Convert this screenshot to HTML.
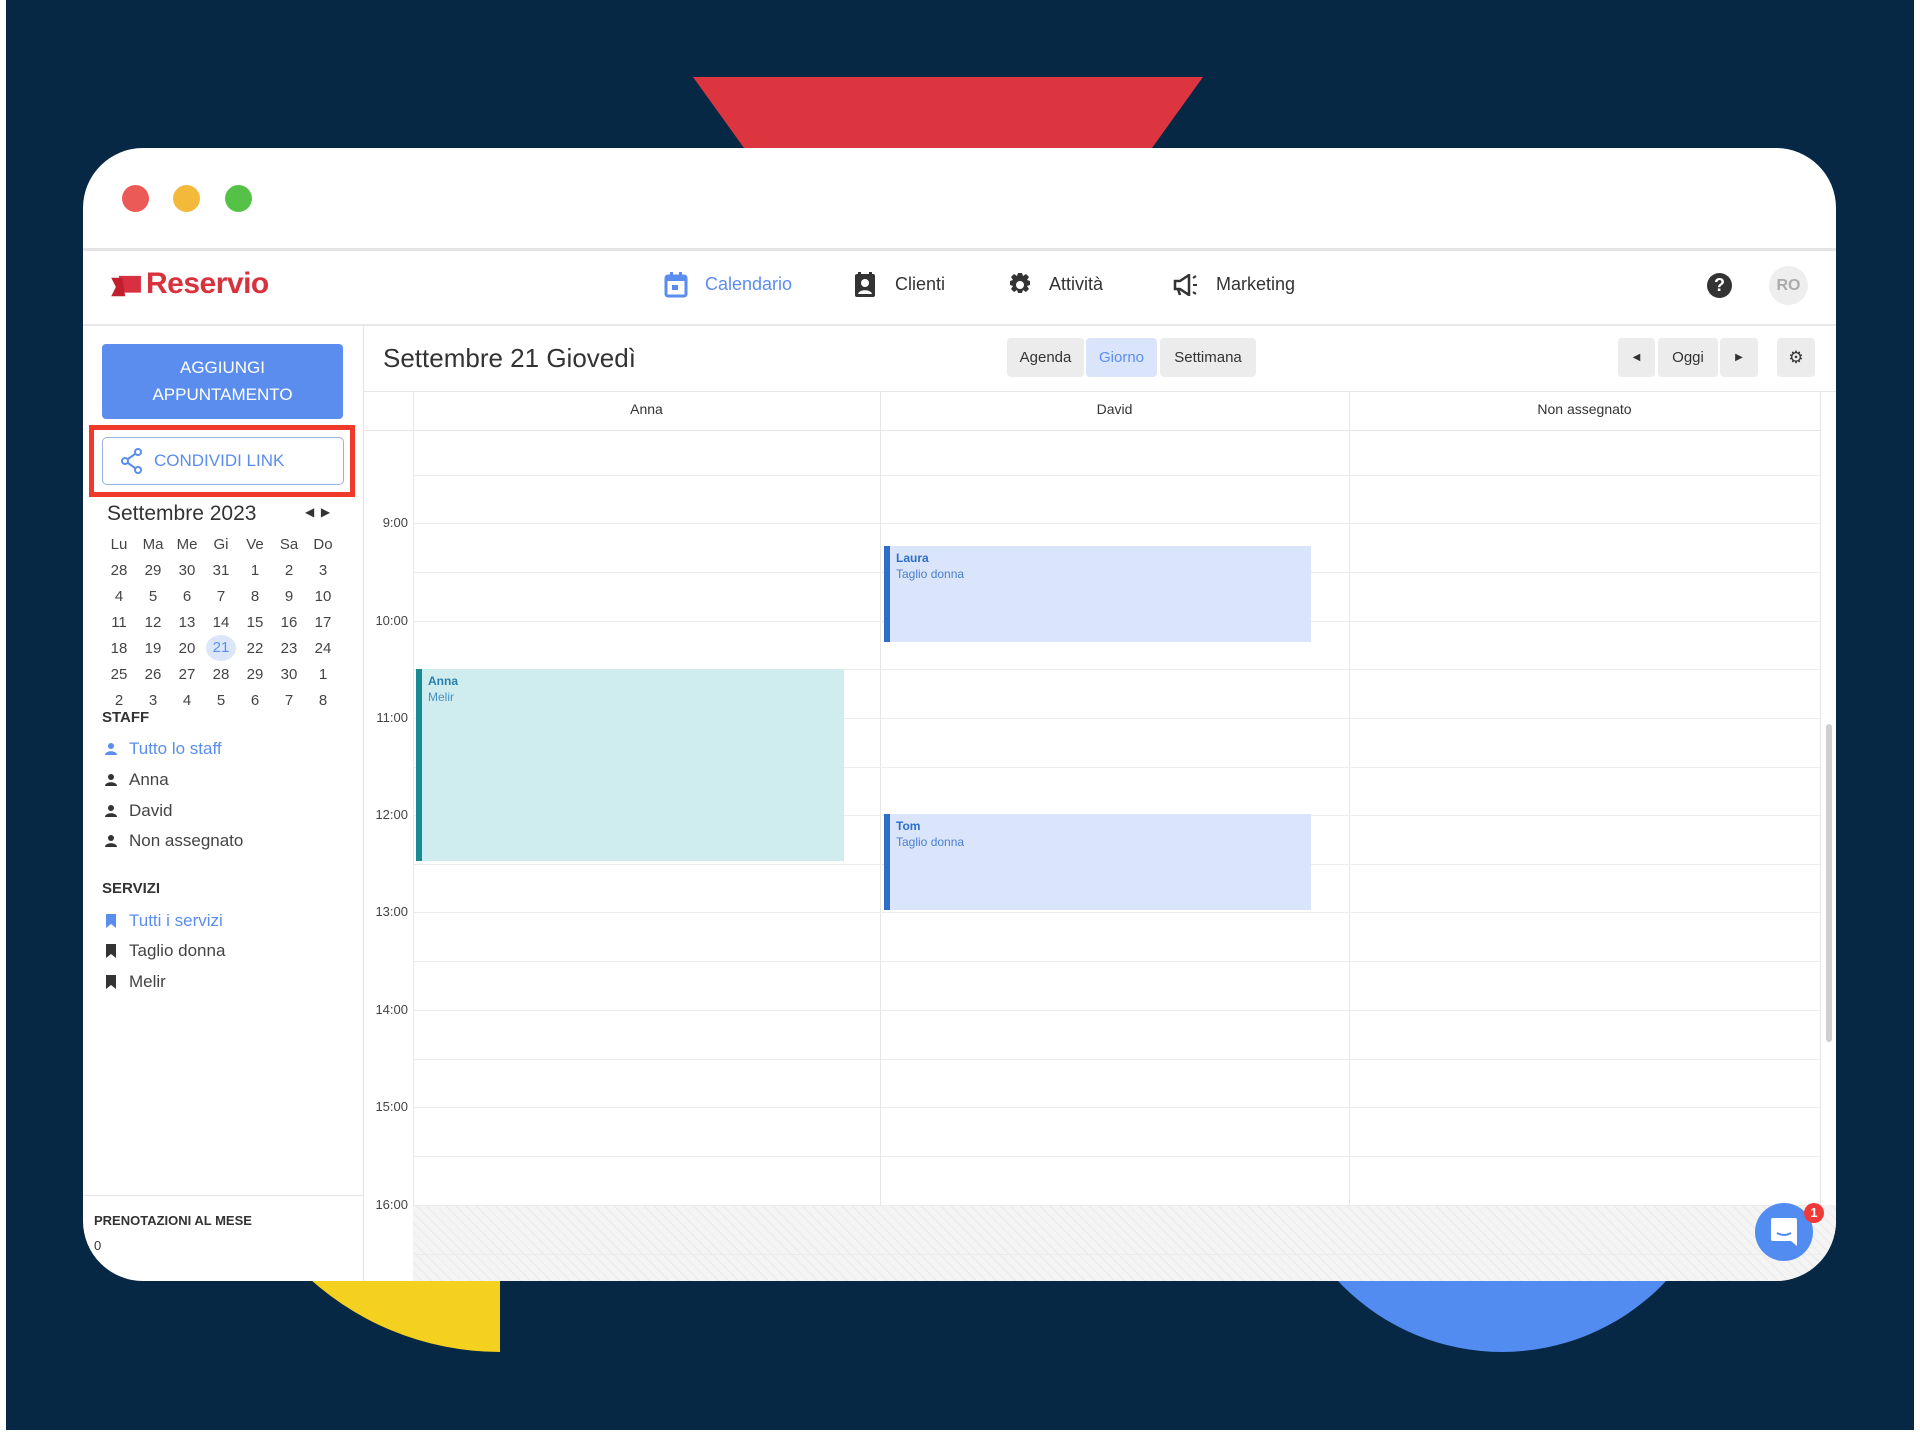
<!DOCTYPE html>
<html><head><meta charset="utf-8"><style>
*{margin:0;padding:0;box-sizing:border-box}
body{width:1920px;height:1443px;background:#fff;position:relative;overflow:hidden;font-family:"Liberation Sans","DejaVu Sans",sans-serif;color:#333}
.a{position:absolute}
.bg{left:6px;top:0;width:1908px;height:1430px;background:#062845;overflow:hidden}
.wrap{left:0;top:0;width:1920px;height:1443px;clip-path:inset(148px 84px 162px 83px round 60px)}
.card{left:83px;top:148px;width:1753px;height:1133px;background:#fff}
.dot{width:27px;height:27px;border-radius:50%;top:185px}
.line{height:1px;background:#e6e6e6}
.navt{font-size:18px;top:274px}
.cal td{width:34px;text-align:center;font-size:15px;height:26px;color:#444}
.g{color:#aaa}
.btn{background:#ececec;border-radius:4px;top:338px;height:39px;font-size:15px;color:#333;text-align:center;line-height:39px}
.hl{left:413px;width:1407px;height:1px;background:#ececec}
.tl{font-size:13px;color:#444;width:48px;text-align:right;left:360px}
.ev{border-left:6px solid #2c6ec9;background:#dae5fb;font-size:12px;padding:4px 6px;line-height:16px}
.side{font-size:17px;color:#444;left:129px}
.ic{left:105px;width:12px;height:14px}
</style></head><body>
<div class="a bg">
  <div class="a" style="left:687px;top:77px;width:510px;height:71px;background:#dc3540;clip-path:polygon(0 0,100% 0,90% 100%,10% 100%)"></div>
  <div class="a" style="left:210px;top:784px;width:568px;height:568px;border-radius:50%;background:#f5d11f;clip-path:inset(0 284px 0 0)"></div>
  <div class="a" style="left:1271px;top:902px;width:450px;height:450px;border-radius:50%;background:#528cf0"></div>
</div>
<div class="a wrap">
<div class="a card">
  <div class="a" style="left:0;top:100px;width:1753px;height:3px;background:#e4e4e4"></div>
</div>
<div class="a dot" style="left:122px;background:#ec5a58"></div>
<div class="a dot" style="left:173px;background:#f3b93a"></div>
<div class="a dot" style="left:225px;background:#55c247"></div>

<svg class="a" style="left:110px;top:274px" width="34" height="26" viewBox="0 0 34 28"><path d="M8 2h24v18H14z" fill="#d83040"/><path d="M0 4h12l3 20H0l5-10z" fill="#c0202e"/></svg>
<div class="a" style="left:146px;top:267px;font-size:30px;color:#d8323f;font-weight:bold;letter-spacing:-0.5px">Reservio</div>
<svg class="a" style="left:664px;top:272px" width="24" height="26" viewBox="0 0 24 26"><rect x="2" y="4" width="20" height="20" rx="2" fill="none" stroke="#5b8def" stroke-width="3"/><rect x="2" y="4" width="20" height="5" fill="#5b8def"/><rect x="6" y="0" width="3" height="6" fill="#5b8def"/><rect x="15" y="0" width="3" height="6" fill="#5b8def"/><rect x="8" y="13" width="6" height="5" fill="#5b8def"/></svg>
<div class="a navt" style="left:705px;color:#5b8def">Calendario</div>
<svg class="a" style="left:854px;top:272px" width="22" height="26" viewBox="0 0 22 26"><rect x="1" y="2" width="20" height="23" rx="2" fill="#333"/><rect x="4" y="0" width="3" height="4" fill="#333"/><rect x="15" y="0" width="3" height="4" fill="#333"/><circle cx="11" cy="11" r="4" fill="#fff"/><path d="M4 22c1-5 13-5 14 0z" fill="#fff"/></svg>
<div class="a navt" style="left:895px">Clienti</div>
<svg class="a" style="left:1008px;top:273px" width="24" height="24" viewBox="0 0 24 24"><path d="M10 0h4l1 3 3-2 3 3-2 3 3 1v4l-3 1 2 3-3 3-3-2-1 3h-4l-1-3-3 2-3-3 2-3-3-1v-4l3-1-2-3 3-3 3 2z" fill="#333"/><circle cx="12" cy="12" r="4" fill="#fff"/></svg>
<div class="a navt" style="left:1049px">Attività</div>
<svg class="a" style="left:1173px;top:274px" width="28" height="22" viewBox="0 0 28 22"><path d="M2 7h5l9-6v20l-9-6H2z" fill="none" stroke="#333" stroke-width="2.5"/><path d="M5 15l2 6" stroke="#333" stroke-width="2.5"/><path d="M20 4l3-2M20 11h4M20 18l3 2" stroke="#333" stroke-width="2"/></svg>
<div class="a navt" style="left:1216px">Marketing</div>
<div class="a" style="left:1707px;top:273px;width:25px;height:25px;border-radius:50%;background:#333;color:#fff;font-weight:bold;font-size:18px;text-align:center;line-height:25px">?</div>
<div class="a" style="left:1769px;top:266px;width:39px;height:39px;border-radius:50%;background:#eee;color:#aaa;font-size:16px;font-weight:bold;text-align:center;line-height:39px">RO</div>
<div class="a line" style="left:83px;top:324px;width:1753px;height:2px;background:#e8e8e8"></div>

<div class="a" style="left:363px;top:326px;width:1px;height:955px;background:#e4e4e4"></div>
<div class="a" style="left:102px;top:344px;width:241px;height:75px;background:#5b8def;border-radius:4px;color:#fff;font-size:17px;text-align:center;line-height:27px;padding-top:10px">AGGIUNGI<br>APPUNTAMENTO</div>
<div class="a" style="left:89px;top:425px;width:266px;height:72px;border:5px solid #f03a2a"></div>
<div class="a" style="left:102px;top:437px;width:242px;height:48px;border:1.5px solid #98b4e0;border-radius:5px"></div>
<svg class="a" style="left:120px;top:448px" width="24" height="26" viewBox="0 0 24 26"><circle cx="18" cy="4" r="3" fill="none" stroke="#5b8def" stroke-width="2"/><circle cx="5" cy="13" r="3" fill="none" stroke="#5b8def" stroke-width="2"/><circle cx="18" cy="22" r="3" fill="none" stroke="#5b8def" stroke-width="2"/><path d="M8 11l7-5M8 15l7 5" stroke="#5b8def" stroke-width="2"/></svg>
<div class="a" style="left:154px;top:451px;font-size:17px;color:#5b8def">CONDIVIDI LINK</div>
<div class="a" style="left:107px;top:502px;font-size:21px;color:#333">Settembre 2023</div>
<div class="a" style="left:305px;top:505px;font-size:12px;color:#333">◀&nbsp;&nbsp;▶</div>
<table class="a cal" style="left:102px;top:531px;border-collapse:collapse">
<tr><td>Lu</td><td>Ma</td><td>Me</td><td>Gi</td><td>Ve</td><td>Sa</td><td>Do</td></tr>
<tr><td class="g">28</td><td class="g">29</td><td class="g">30</td><td class="g">31</td><td>1</td><td>2</td><td>3</td></tr>
<tr><td>4</td><td>5</td><td>6</td><td>7</td><td>8</td><td>9</td><td>10</td></tr>
<tr><td>11</td><td>12</td><td>13</td><td>14</td><td>15</td><td>16</td><td>17</td></tr>
<tr><td>18</td><td>19</td><td>20</td><td><span style="display:inline-block;width:30px;height:26px;line-height:26px;border-radius:50%;background:#dbe6fb;color:#5b8def">21</span></td><td>22</td><td>23</td><td>24</td></tr>
<tr><td>25</td><td>26</td><td>27</td><td>28</td><td>29</td><td>30</td><td class="g">1</td></tr>
<tr><td class="g">2</td><td class="g">3</td><td class="g">4</td><td class="g">5</td><td class="g">6</td><td class="g">7</td><td class="g">8</td></tr>
</table>
<div class="a" style="left:102px;top:709px;font-size:15px;font-weight:bold;color:#333">STAFF</div>
<div class="a side" style="top:739px;color:#5b8def">Tutto lo staff</div>
<div class="a side" style="top:770px">Anna</div>
<div class="a side" style="top:801px">David</div>
<div class="a side" style="top:831px">Non assegnato</div>
<svg class="a ic" style="top:742px" viewBox="0 0 12 14"><circle cx="6" cy="4" r="3" fill="#5b8def"/><path d="M0 13c0-5 12-5 12 0z" fill="#5b8def"/></svg>
<svg class="a ic" style="top:773px" viewBox="0 0 12 14"><circle cx="6" cy="4" r="3" fill="#333"/><path d="M0 13c0-5 12-5 12 0z" fill="#333"/></svg>
<svg class="a ic" style="top:804px" viewBox="0 0 12 14"><circle cx="6" cy="4" r="3" fill="#333"/><path d="M0 13c0-5 12-5 12 0z" fill="#333"/></svg>
<svg class="a ic" style="top:834px" viewBox="0 0 12 14"><circle cx="6" cy="4" r="3" fill="#333"/><path d="M0 13c0-5 12-5 12 0z" fill="#333"/></svg>
<div class="a" style="left:102px;top:880px;font-size:15px;font-weight:bold;color:#333">SERVIZI</div>
<div class="a side" style="top:911px;color:#5b8def">Tutti i servizi</div>
<div class="a side" style="top:941px">Taglio donna</div>
<div class="a side" style="top:972px">Melir</div>
<svg class="a ic" style="top:914px;left:106px;width:10px" viewBox="0 0 10 14"><path d="M0 0h10v14l-5-4-5 4z" fill="#5b8def"/></svg>
<svg class="a ic" style="top:944px;left:106px;width:10px" viewBox="0 0 10 14"><path d="M0 0h10v14l-5-4-5 4z" fill="#333"/></svg>
<svg class="a ic" style="top:975px;left:106px;width:10px" viewBox="0 0 10 14"><path d="M0 0h10v14l-5-4-5 4z" fill="#333"/></svg>
<div class="a" style="left:83px;top:1195px;width:280px;height:1px;background:#e4e4e4"></div>
<div class="a" style="left:94px;top:1213px;font-size:13px;font-weight:bold;color:#333">PRENOTAZIONI AL MESE</div>
<div class="a" style="left:94px;top:1238px;font-size:13px;color:#333">0</div>

<div class="a" style="left:383px;top:343px;font-size:26px;color:#333">Settembre 21 Giovedì</div>
<div class="a btn" style="left:1007px;width:77px">Agenda</div>
<div class="a btn" style="left:1086px;width:71px;background:#dae5fb;color:#5b8def">Giorno</div>
<div class="a btn" style="left:1160px;width:96px">Settimana</div>
<div class="a btn" style="left:1618px;width:37px;font-size:10px">◀</div>
<div class="a btn" style="left:1658px;width:60px">Oggi</div>
<div class="a btn" style="left:1720px;width:38px;font-size:10px">▶</div>
<div class="a btn" style="left:1777px;width:38px;font-size:17px">⚙</div>
<div class="a" style="left:364px;top:391px;width:1472px;height:1px;background:#e6e6e6"></div>
<div class="a" style="left:413px;top:391px;width:1px;height:890px;background:#e6e6e6"></div>
<div class="a" style="left:880px;top:391px;width:1px;height:890px;background:#e6e6e6"></div>
<div class="a" style="left:1349px;top:391px;width:1px;height:890px;background:#e6e6e6"></div>
<div class="a" style="left:1820px;top:391px;width:1px;height:890px;background:#e6e6e6"></div>
<div class="a" style="left:413px;top:401px;width:467px;text-align:center;font-size:14px;color:#333">Anna</div>
<div class="a" style="left:880px;top:401px;width:469px;text-align:center;font-size:14px;color:#333">David</div>
<div class="a" style="left:1349px;top:401px;width:471px;text-align:center;font-size:14px;color:#333">Non assegnato</div>
<div class="a" style="left:364px;top:430px;width:1456px;height:1px;background:#e6e6e6"></div>
<div class="a" style="left:413px;top:1205px;width:1423px;height:76px;background:repeating-linear-gradient(45deg,#f4f4f4 0 6px,#e9e9e9 6px 7px)"></div>
<div class="a hl" style="top:475px"></div><div class="a hl" style="top:523px"></div>
<div class="a hl" style="top:572px"></div><div class="a hl" style="top:621px"></div>
<div class="a hl" style="top:669px"></div><div class="a hl" style="top:718px"></div>
<div class="a hl" style="top:767px"></div><div class="a hl" style="top:815px"></div>
<div class="a hl" style="top:864px"></div><div class="a hl" style="top:912px"></div>
<div class="a hl" style="top:961px"></div><div class="a hl" style="top:1010px"></div>
<div class="a hl" style="top:1059px"></div><div class="a hl" style="top:1107px"></div>
<div class="a hl" style="top:1156px"></div><div class="a hl" style="top:1205px"></div>
<div class="a hl" style="top:1254px"></div>
<div class="a tl" style="top:515px">9:00</div>
<div class="a tl" style="top:613px">10:00</div>
<div class="a tl" style="top:710px">11:00</div>
<div class="a tl" style="top:807px">12:00</div>
<div class="a tl" style="top:904px">13:00</div>
<div class="a tl" style="top:1002px">14:00</div>
<div class="a tl" style="top:1099px">15:00</div>
<div class="a tl" style="top:1197px">16:00</div>
<div class="a ev" style="left:884px;top:546px;width:427px;height:96px"><b style="color:#2c6ec9">Laura</b><br><span style="color:#4a7fd0">Taglio donna</span></div>
<div class="a ev" style="left:884px;top:814px;width:427px;height:96px"><b style="color:#2c6ec9">Tom</b><br><span style="color:#4a7fd0">Taglio donna</span></div>
<div class="a ev" style="left:416px;top:669px;width:428px;height:192px;background:#cfecee;border-left-color:#1a8a94"><b style="color:#2a7fb0">Anna</b><br><span style="color:#4a90c0">Melir</span></div>
<div class="a" style="left:1826px;top:724px;width:6px;height:318px;border-radius:3px;background:#cfcfcf"></div>
<div class="a" style="left:1755px;top:1203px;width:58px;height:58px;border-radius:50%;background:#528cf0"></div>
<svg class="a" style="left:1771px;top:1218px" width="26" height="28" viewBox="0 0 26 28"><path d="M2 0h22a2 2 0 0 1 2 2v26l-6-5H2a2 2 0 0 1-2-2V2a2 2 0 0 1 2-2z" fill="#fff"/><path d="M6 15q7 4 14 0" stroke="#528cf0" stroke-width="2" fill="none"/></svg>
<div class="a" style="left:1804px;top:1203px;width:20px;height:20px;border-radius:50%;background:#f03a3a;color:#fff;font-size:13px;font-weight:bold;text-align:center;line-height:20px">1</div>
</div>
</body></html>
